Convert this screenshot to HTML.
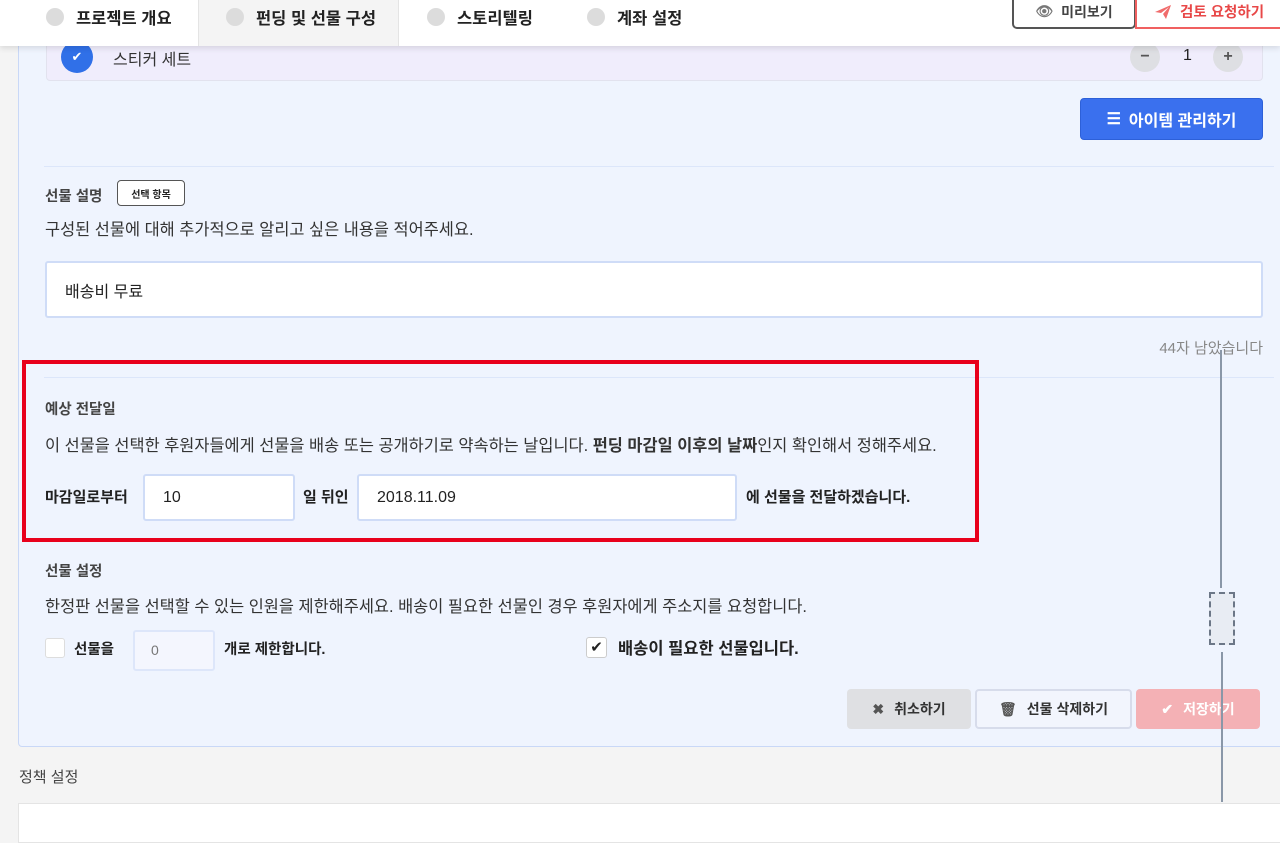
<!DOCTYPE html>
<html><head><meta charset="utf-8"><style>
*{box-sizing:border-box;margin:0;padding:0}
body{width:1280px;height:829px;overflow:hidden;background:#f4f4f4;font-family:"Liberation Sans","Noto Sans CJK KR",sans-serif;color:#222;position:relative}
.a{position:absolute}
.top{left:0;top:0;width:1280px;height:46px;background:#fff;box-shadow:0 2px 6px rgba(0,0,0,.12);z-index:5}
.tab{top:0;height:34px;display:flex;align-items:center;font-size:16.5px;font-weight:bold;color:#222}
.dot{width:18px;height:18px;border-radius:50%;background:#dcdcdc;margin-right:12px}
.panel{left:18px;top:30px;width:1280px;height:717px;background:#eff4fe;border:1px solid #c9d8f7;border-radius:4px}
.lbl{font-size:14.5px;font-weight:bold;color:#444}
.txt{font-size:16.4px;color:#333}
.inp{background:#fff;border:2px solid #cfdcf7;border-radius:3px;font-size:16px;padding-left:16px;display:flex;align-items:center}
.btn{border-radius:4px;display:flex;align-items:center;justify-content:center;font-size:14px;font-weight:bold}
</style></head><body>
<div class="a top">
 <div class="a tab" style="left:46px"><span class="dot"></span>프로젝트 개요</div>
 <div class="a tab" style="left:198px;width:201px;height:46px;padding-bottom:12px;background:#f4f4f4;border-left:1px solid #e4e4e4;border-right:1px solid #e4e4e4;padding-left:27px"><span class="dot"></span>펀딩 및 선물 구성</div>
 <div class="a tab" style="left:427px"><span class="dot"></span>스토리텔링</div>
 <div class="a tab" style="left:587px"><span class="dot"></span>계좌 설정</div>
 <div class="a" style="left:1012px;top:-4px;width:124px;height:33px;border:2px solid #555;border-top:none;border-radius:0 0 5px 5px;display:flex;align-items:center;justify-content:center;font-size:14px;font-weight:bold;color:#444"><span style="color:#777;margin-right:8px">👁</span>미리보기</div>
 <div class="a" style="left:1135px;top:-4px;width:160px;height:33px;border:2px solid #f06060;border-top:none;display:flex;align-items:center;padding-left:18px;font-size:14.5px;font-weight:bold;color:#e84848"><svg width="16" height="14" viewBox="0 0 16 14" style="margin-right:9px"><path d="M0 7L16 0L11 14L8 9L14 2L6 8Z" fill="#f06b6b"/></svg>검토 요청하기</div>
</div>
<div class="a panel"></div>
<div class="a" style="left:46px;top:30px;width:1217px;height:51px;background:#f0edfc;border:1px solid #e2e2ee;border-radius:4px"></div>
<div class="a" style="left:61px;top:41px;width:32px;height:32px;border-radius:50%;background:#3070e8;color:#fff;font-size:13px;display:flex;align-items:center;justify-content:center">✔</div>
<div class="a txt" style="left:113px;top:46px;font-size:16px">스티커 세트</div>
<div class="a" style="left:1130px;top:42px;width:30px;height:30px;border-radius:50%;background:#dedfe3;text-align:center;line-height:29px;font-weight:bold;color:#555">−</div>
<div class="a" style="left:1183px;top:47px;font-size:16px">1</div>
<div class="a" style="left:1213px;top:42px;width:30px;height:30px;border-radius:50%;background:#dedfe3;text-align:center;line-height:29px;font-weight:bold;color:#555">+</div>
<div class="a btn" style="left:1080px;top:98px;width:183px;height:42px;background:#3a70ee;border:1px solid #2d60d8;color:#fff;font-size:16px"><span style="margin-right:8px">☰</span>아이템 관리하기</div>
<div class="a" style="left:44px;top:166px;width:1230px;height:1px;background:#dce6fa"></div>
<div class="a lbl" style="left:45px;top:185px">선물 설명</div>
<div class="a" style="left:117px;top:180px;width:68px;height:26px;border:1px solid #555;border-radius:4px;font-size:10px;font-weight:bold;display:flex;align-items:center;justify-content:center;background:#fff">선택 항목</div>
<div class="a txt" style="left:45px;top:216px">구성된 선물에 대해 추가적으로 알리고 싶은 내용을 적어주세요.</div>
<div class="a inp" style="left:45px;top:261px;width:1218px;height:57px;padding-left:18px">배송비 무료</div>
<div class="a" style="left:1100px;width:163px;text-align:right;top:337px;font-size:15px;color:#888">44자 남았습니다</div>
<div class="a" style="left:44px;top:377px;width:1230px;height:1px;background:#dce6fa"></div>
<div class="a" style="left:22px;top:360px;width:957px;height:182px;border:4px solid #e8001c"></div>
<div class="a lbl" style="left:45px;top:398px">예상 전달일</div>
<div class="a txt" style="left:45px;top:432px">이 선물을 선택한 후원자들에게 선물을 배송 또는 공개하기로 약속하는 날입니다. <b>펀딩 마감일 이후의 날짜</b>인지 확인해서 정해주세요.</div>
<div class="a" style="left:45px;top:486px;font-size:15px;font-weight:bold">마감일로부터</div>
<div class="a inp" style="left:143px;top:474px;width:152px;height:47px;padding-left:18px">10</div>
<div class="a" style="left:303px;top:486px;font-size:15px;font-weight:bold">일 뒤인</div>
<div class="a inp" style="left:357px;top:474px;width:380px;height:47px;padding-left:18px">2018.11.09</div>
<div class="a" style="left:746px;top:486px;font-size:15px;font-weight:bold">에 선물을 전달하겠습니다.</div>
<div class="a lbl" style="left:45px;top:560px">선물 설정</div>
<div class="a txt" style="left:45px;top:593px">한정판 선물을 선택할 수 있는 인원을 제한해주세요. 배송이 필요한 선물인 경우 후원자에게 주소지를 요청합니다.</div>
<div class="a" style="left:45px;top:638px;width:20px;height:20px;background:#fff;border:1px solid #ddd;border-radius:3px"></div>
<div class="a" style="left:74px;top:638px;font-size:14.5px;font-weight:bold">선물을</div>
<div class="a" style="left:133px;top:630px;width:82px;height:41px;background:#f4f6fe;border:2px solid #dde6fa;border-radius:3px;font-size:14px;color:#777;padding:10px 0 0 16px">0</div>
<div class="a" style="left:224px;top:638px;font-size:14.5px;font-weight:bold">개로 제한합니다.</div>
<div class="a" style="left:586px;top:637px;width:21px;height:21px;background:#fff;border:1px solid #ccc;border-radius:3px;font-size:15px;text-align:center;line-height:19px">✔</div>
<div class="a" style="left:618px;top:635px;font-size:16.5px;font-weight:bold">배송이 필요한 선물입니다.</div>
<div class="a btn" style="left:847px;top:689px;width:124px;height:40px;background:#dfe0e3;color:#333"><span style="color:#555;margin-right:10px">✖</span>취소하기</div>
<div class="a btn" style="left:975px;top:689px;width:157px;height:40px;background:#f2f5fd;border:2px solid #d7dceb;color:#333"><span style="color:#555;margin-right:10px">🗑</span>선물 삭제하기</div>
<div class="a btn" style="left:1136px;top:689px;width:124px;height:40px;background:#f4b1b5;color:#fff"><span style="margin-right:10px">✔</span>저장하기</div>
<div class="a" style="left:19px;top:766px;font-size:15px;color:#444">정책 설정</div>
<div class="a" style="left:18px;top:803px;width:1280px;height:40px;background:#fff;border:1px solid #e4e4e4"></div>
<div class="a" style="left:1220px;top:350px;width:2px;height:238px;background:#8a97a8"></div>
<div class="a" style="left:1209px;top:592px;width:26px;height:53px;border:2px dashed #6c7787;background:#e8ecf3"></div>
<div class="a" style="left:1221px;top:652px;width:2px;height:150px;background:#8a97a8"></div>
</body></html>
